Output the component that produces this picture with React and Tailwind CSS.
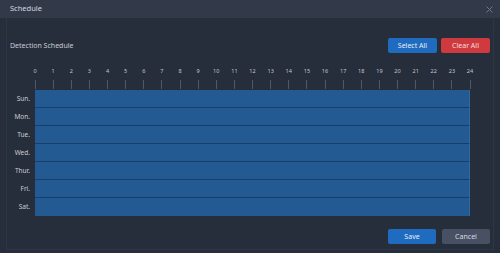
import React from "react";

const hours = Array.from({ length: 25 }, (_, i) => i);
const days = ["Sun.", "Mon.", "Tue.", "Wed.", "Thur.", "Fri.", "Sat."];

export default function App() {
  return (
    <div
      className="w-[500px] h-[253px] bg-[#262d3b] flex flex-col overflow-hidden text-[#c9ced6]"
      style={{ fontFamily: "'Noto Sans', 'Open Sans', sans-serif" }}
    >
      <div className="h-[18px] bg-[#323a4a] flex items-center justify-between pl-[10px] pr-[7px] shrink-0">
        <span className="text-[7.5px] leading-none text-[#d5d9e0]">Schedule</span>
        <svg width="7" height="7" viewBox="0 0 7 7" className="text-[#6f7888]">
          <path d="M0.5 0.5 L6.5 6.5 M6.5 0.5 L0.5 6.5" stroke="currentColor" strokeWidth="1" />
        </svg>
      </div>
      <div className="flex-1 mx-[6px] mb-[3px] border-l border-b border-r border-[#2e3645] flex flex-col">
        <div className="flex items-center justify-between pl-[3px] pr-[3px] mt-[20px] h-[15px]">
          <span className="text-[7px] leading-none">Detection Schedule</span>
          <div className="flex gap-[4px]">
            <button className="w-[49px] h-[15px] rounded-[2px] bg-[#1f6bbf] text-[7px] leading-none text-[#e6eef8]">
              Select All
            </button>
            <button className="w-[49px] h-[15px] rounded-[2px] bg-[#cf3a3e] text-[7px] leading-none text-[#f6dede]">
              Clear All
            </button>
          </div>
        </div>
        <div className="flex mt-[16px] pl-[28px]">
          <div className="w-[435px] flex justify-between h-[21px]">
            {hours.map((h) => (
              <div key={h} className="w-0 flex flex-col items-center">
                <span className="text-[5.5px] leading-none whitespace-nowrap text-[#c3c8d1] h-[9px]">{h}</span>
                <div className="w-px h-[9px] mt-[2px] bg-[#4f5869]"></div>
              </div>
            ))}
          </div>
        </div>
        <div className="flex flex-col">
          {days.map((d, i) => (
            <div key={d} className="flex h-[18px]">
              <div className="w-[28px] pr-[5px] text-right text-[6.5px] leading-[18px] text-[#c9ced6]">{d}</div>
              <div
                className={
                  "w-[435px] bg-[#235a92] border-r border-[#2f6aa5] " +
                  (i < 6 ? "border-b border-b-[#173f6c]" : "")
                }
              ></div>
            </div>
          ))}
        </div>
        <div className="flex justify-end gap-[6px] mt-[13px] pr-[3px]">
          <button className="w-[48px] h-[15px] rounded-[2px] bg-[#1f6bbf] text-[7px] leading-none text-[#e6eef8]">
            Save
          </button>
          <button className="w-[48px] h-[15px] rounded-[2px] bg-[#485163] text-[7px] leading-none text-[#d6dae1]">
            Cancel
          </button>
        </div>
      </div>
    </div>
  );
}
